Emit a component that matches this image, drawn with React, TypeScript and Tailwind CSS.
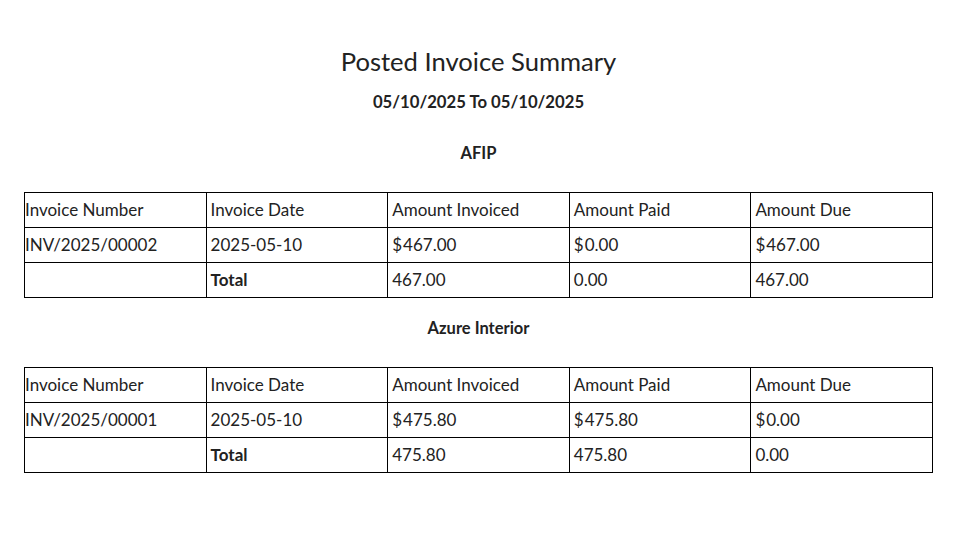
import React from "react";

type Row = { num: string; date: string; inv: string; paid: string; due: string };
type Group = { name: string; row: Row; total: [string, string, string] };

const groups: Group[] = [
  {
    name: "AFIP",
    row: { num: "INV/2025/00002", date: "2025-05-10", inv: "467.00", paid: "0.00", due: "467.00" },
    total: ["467.00", "0.00", "467.00"],
  },
  {
    name: "Azure Interior",
    row: { num: "INV/2025/00001", date: "2025-05-10", inv: "475.80", paid: "475.80", due: "0.00" },
    total: ["475.80", "475.80", "0.00"],
  },
];

const td = "border border-black h-[35px] p-0 pl-[4px] align-middle text-left font-normal";
const tdFirst = "border border-black h-[35px] p-0 align-middle text-left font-normal";

function Money({ v }: { v: string }) {
  return (
    <>
      <span className="mr-[1px]">$</span>
      {v}
    </>
  );
}

function InvoiceTable({ g }: { g: Group }) {
  return (
    <table className="w-full table-fixed border-collapse text-[17px] leading-[20px]">
      <tbody>
        <tr>
          <td className={tdFirst}>Invoice Number</td>
          <td className={td}>Invoice Date</td>
          <td className={td}>Amount Invoiced</td>
          <td className={td}>Amount Paid</td>
          <td className={td}>Amount Due</td>
        </tr>
        <tr>
          <td className={tdFirst}>{g.row.num}</td>
          <td className={td}>{g.row.date}</td>
          <td className={td}><Money v={g.row.inv} /></td>
          <td className={td}><Money v={g.row.paid} /></td>
          <td className={td}><Money v={g.row.due} /></td>
        </tr>
        <tr>
          <td className={tdFirst}></td>
          <td className={td + " !font-bold"}>Total</td>
          <td className={td}>{g.total[0]}</td>
          <td className={td}>{g.total[1]}</td>
          <td className={td}>{g.total[2]}</td>
        </tr>
      </tbody>
    </table>
  );
}

export default function App() {
  return (
    <div
      className="w-[957px] h-[558px] bg-white text-[#222] px-6 pt-[46px]"
      style={{ fontFamily: "Lato, 'Open Sans', sans-serif" }}
    >
      <h1 className="text-center text-[25.6px] leading-[30px] font-normal">Posted Invoice Summary</h1>
      <div className="text-center text-[16.7px] leading-[20px] font-bold mt-[16px]">05/10/2025 To 05/10/2025</div>
      <div className="text-center text-[16.5px] leading-[20px] font-bold mt-[31px] mb-[29px]">{groups[0].name}</div>
      <InvoiceTable g={groups[0]} />
      <div className="text-center text-[16.5px] leading-[20px] font-bold mt-[20px] mb-[29px]">{groups[1].name}</div>
      <InvoiceTable g={groups[1]} />
    </div>
  );
}
